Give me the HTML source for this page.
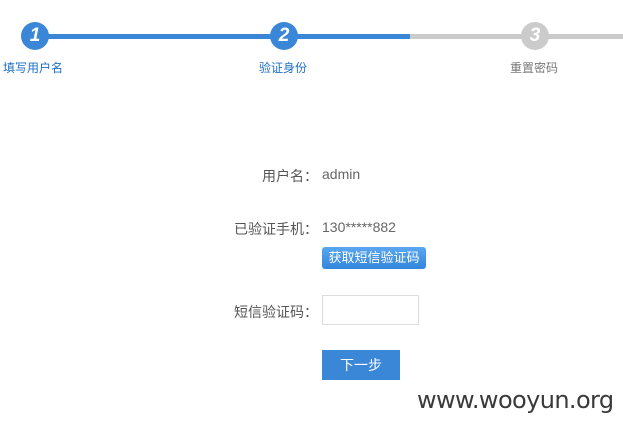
<!DOCTYPE html>
<html><head><meta charset="utf-8"><style>
body{margin:0;width:623px;height:430px;background:#fff;position:relative;overflow:hidden;font-family:"Liberation Sans","Noto Sans CJK SC",sans-serif;}
.a{position:absolute}
.c{position:absolute;width:28px;height:28px;border-radius:50%;color:#fff;font:italic bold 19px "Liberation Sans",sans-serif;text-align:center;line-height:28px;top:22px}
.lb{position:absolute;top:59px;font-size:12px;width:80px;text-align:center}
.f{position:absolute;font-size:14px;color:#666;}
.r{right:305px;text-align:right;color:#555}
</style></head><body>
<div class="a" style="left:35px;top:34px;width:375px;height:5px;background:#3a87d8"></div>
<div class="a" style="left:410px;top:34px;width:213px;height:5px;background:#cbcbcb"></div>
<div class="c" style="left:21px;background:#3a87d8">1</div>
<div class="c" style="left:270px;background:#3a87d8">2</div>
<div class="c" style="left:521px;background:#cbcbcb">3</div>
<div class="lb" style="left:-7px;color:#1e6fc8">填写用户名</div>
<div class="lb" style="left:243px;color:#1e6fc8">验证身份</div>
<div class="lb" style="left:494px;color:#777">重置密码</div>
<div class="f r" style="top:166px">用户名：</div>
<div class="f" style="left:322px;top:166px">admin</div>
<div class="f r" style="top:219px">已验证手机：</div>
<div class="f" style="left:322px;top:219px">130*****882</div>
<div class="a" style="left:322px;top:247px;width:104px;height:22px;border-radius:3px;background:linear-gradient(#5aa6f0,#3386dc);color:#fff;font-size:13px;text-align:center;line-height:22px">获取短信验证码</div>
<div class="f r" style="top:302px">短信验证码：</div>
<div class="a" style="left:322px;top:295px;width:95px;height:28px;border:1px solid #ddd"></div>
<div class="a" style="left:322px;top:350px;width:78px;height:30px;background:#3a87d8;color:#fff;font-size:14px;text-align:center;line-height:30px">下一步</div>
<div class="a" style="left:417px;top:386px;font-size:24px;color:#3a3a3a;font-family:'DejaVu Sans',sans-serif;letter-spacing:-0.6px">www.wooyun.org</div>
</body></html>
